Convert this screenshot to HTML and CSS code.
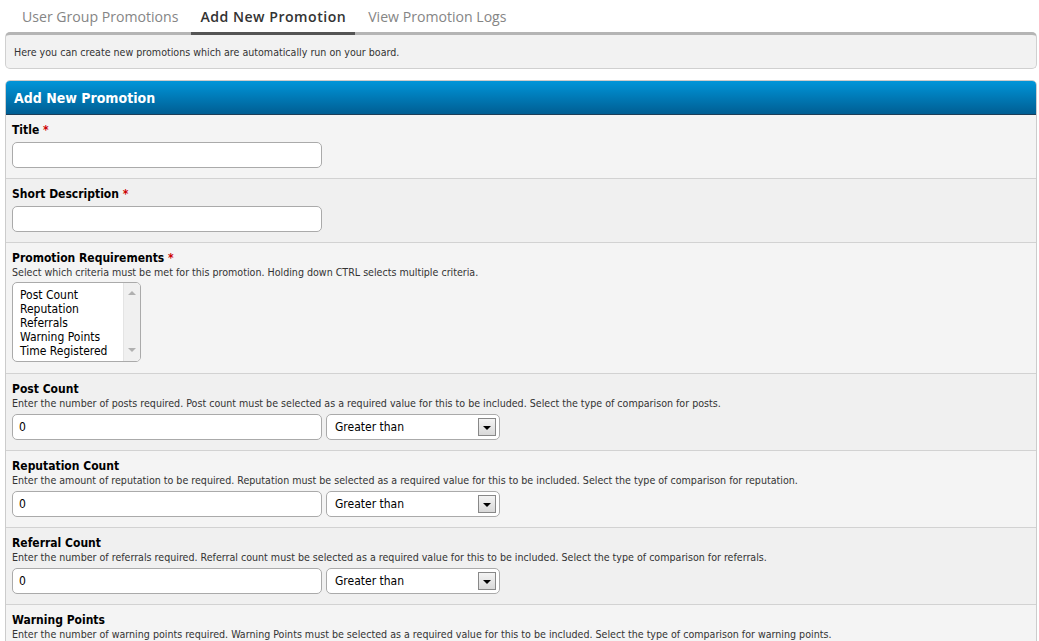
FILE: index.html
```html
<!DOCTYPE html>
<html lang="en">
<head>
<meta charset="utf-8">
<title>Add New Promotion</title>
<link rel="stylesheet" href="styles.css">
</head>
<body>
<div class="page">
  <nav class="tabs">
    <a class="tab">User Group Promotions</a>
    <a class="tab active">Add New Promotion</a>
    <a class="tab">View Promotion Logs</a>
  </nav>
  <div class="tab-desc">Here you can create new promotions which are automatically run on your board.</div>

  <form class="panel">
    <div class="panel-head">Add New Promotion</div>

    <div class="row">
      <label class="label">Title <em>*</em></label>
      <input class="text" type="text">
    </div>

    <div class="row alt">
      <label class="label">Short Description <em>*</em></label>
      <input class="text" type="text">
    </div>

    <div class="row">
      <label class="label">Promotion Requirements <em>*</em></label>
      <div class="desc">Select which criteria must be met for this promotion. Holding down CTRL selects multiple criteria.</div>
      <div class="listbox" role="listbox" aria-multiselectable="true">
        <ul class="options">
          <li>Post Count</li>
          <li>Reputation</li>
          <li>Referrals</li>
          <li>Warning Points</li>
          <li>Time Registered</li>
        </ul>
        <div class="scrollbar"><span class="up"></span><span class="down"></span></div>
      </div>
    </div>

    <div class="row alt">
      <label class="label">Post Count</label>
      <div class="desc">Enter the number of posts required. Post count must be selected as a required value for this to be included. Select the type of comparison for posts.</div>
      <div class="pair">
        <input class="text" type="text" value="0">
        <div class="dropdown"><span class="dd-text">Greater than</span><span class="dd-btn"></span></div>
      </div>
    </div>

    <div class="row">
      <label class="label">Reputation Count</label>
      <div class="desc">Enter the amount of reputation to be required. Reputation must be selected as a required value for this to be included. Select the type of comparison for reputation.</div>
      <div class="pair">
        <input class="text" type="text" value="0">
        <div class="dropdown"><span class="dd-text">Greater than</span><span class="dd-btn"></span></div>
      </div>
    </div>

    <div class="row alt">
      <label class="label">Referral Count</label>
      <div class="desc">Enter the number of referrals required. Referral count must be selected as a required value for this to be included. Select the type of comparison for referrals.</div>
      <div class="pair">
        <input class="text" type="text" value="0">
        <div class="dropdown"><span class="dd-text">Greater than</span><span class="dd-btn"></span></div>
      </div>
    </div>

    <div class="row">
      <label class="label">Warning Points</label>
      <div class="desc">Enter the number of warning points required. Warning Points must be selected as a required value for this to be included. Select the type of comparison for warning points.</div>
      <div class="pair">
        <input class="text" type="text" value="0">
        <div class="dropdown"><span class="dd-text">Greater than</span><span class="dd-btn"></span></div>
      </div>
    </div>
  </form>
</div>
</body>
</html>
```

FILE: styles.css
```css
* { box-sizing: border-box; }

html, body {
  margin: 0;
  padding: 0;
  background: #fff;
  overflow: hidden;
}

body {
  font-family: "DejaVu Sans Condensed", "DejaVu Sans", sans-serif;
  font-stretch: condensed;
  font-size: 11px;
  color: #333;
}

.page {
  padding: 0 2px 0 5px;
}

.tabs {
  display: flex;
  gap: 4px;
  padding-left: 8px;
  height: 32px;
}

.tab {
  font-family: "Open Sans", "Noto Sans", sans-serif;
  font-stretch: normal;
  font-size: 14.1px;
  color: #858585;
  padding: 6px 9px 0;
  line-height: 22px;
}

.tab.active {
  color: #333;
  font-weight: 600;
  letter-spacing: 0.5px;
  border-bottom: 3px solid #555;
  height: 35px;
  position: relative;
  z-index: 1;
}

.tab-desc {
  background: #f2f2f2;
  border: 1px solid #d0d0d0;
  border-top: 3px solid #b5b5b5;
  border-radius: 5px;
  padding: 11px 8px 10px;
  line-height: 13px;
  font-size: 10.6px;
  color: #333;
  height: 37px;
}

.panel {
  margin-top: 11px;
  border: 1px solid #ccc;
  border-radius: 5px 5px 0 0;
  overflow: hidden;
}

.panel-head {
  height: 34px;
  background: linear-gradient(#0095d9, #005e93);
  border-bottom: 1px solid #1b3d58;
  color: #fff;
  font-weight: bold;
  font-size: 14px;
  padding: 9px 8px 0;
  line-height: 16px;
}

.row {
  background: #f4f4f4;
  border-bottom: 1px solid #d2d2d2;
  padding: 7px 6px 10px;
}

.row.alt {
  background: #f0f0f0;
}

.label {
  display: block;
  font-weight: bold;
  font-size: 12px;
  line-height: 16px;
  color: #000;
}

.label em {
  font-style: normal;
  color: #c00;
}

.desc {
  font-size: 10.6px;
  line-height: 13px;
  color: #333;
}

.text {
  display: block;
  margin: 4px 0 0;
  width: 310px;
  height: 26px;
  border: 1px solid #aaa;
  border-radius: 5px;
  background: #fff;
  font-family: inherit;
  font-stretch: condensed;
  font-size: 12px;
  padding: 0 6px;
  color: #000;
}

.pair {
  display: flex;
  gap: 4px;
}

.dropdown {
  margin-top: 4px;
  width: 174px;
  height: 26px;
  border: 1px solid #aaa;
  border-radius: 5px;
  background: #fff;
  display: flex;
  align-items: center;
  justify-content: space-between;
  padding: 0 3px 0 8px;
  font-size: 12px;
  color: #000;
}

.dd-btn {
  width: 18px;
  height: 18px;
  border: 1px solid #888;
  background: linear-gradient(#f4f4f4, #d8d8d8);
  position: relative;
}

.dd-btn::after {
  content: "";
  position: absolute;
  left: 4px;
  top: 7px;
  border-left: 4px solid transparent;
  border-right: 4px solid transparent;
  border-top: 4px solid #000;
}

.listbox {
  margin: 3px 0 1px;
  width: 129px;
  height: 80px;
  border: 1px solid #aaa;
  border-radius: 5px;
  background: #fff;
  display: flex;
  overflow: hidden;
}

.options {
  list-style: none;
  margin: 0;
  padding: 5px 0 0 7px;
  flex: 1;
  font-size: 12px;
  line-height: 14px;
  color: #000;
}

.scrollbar {
  width: 17px;
  background: #f0f0f0;
  border-left: 1px solid #e4e4e4;
  position: relative;
}

.scrollbar .up,
.scrollbar .down {
  position: absolute;
  left: 4px;
  border-left: 4px solid transparent;
  border-right: 4px solid transparent;
}

.scrollbar .up {
  top: 8px;
  border-bottom: 4px solid #b0b0b0;
}

.scrollbar .down {
  bottom: 9px;
  border-top: 4px solid #b0b0b0;
}
```
